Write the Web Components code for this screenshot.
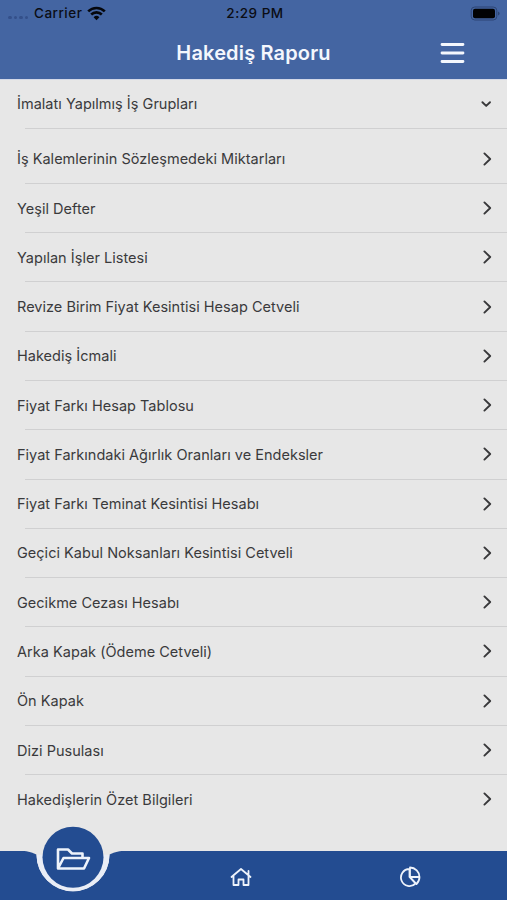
<!DOCTYPE html>
<html lang="tr">
<head>
<meta charset="utf-8">
<title>Hakediş Raporu</title>
<style>
  html, body { margin: 0; height: 100%; }
  body { background: #e7e7e7; color: #3a3a3c; font-family: Inter, "Liberation Sans", sans-serif; overflow: hidden; }
</style>
</head>
<body>
<report-screen>
  <status-bar slot="top" carrier="Carrier" time="2:29 PM"></status-bar>
  <title-bar slot="top">Hakediş Raporu</title-bar>
  <report-row kind="group">İmalatı Yapılmış İş Grupları</report-row>
  <report-row>İş Kalemlerinin Sözleşmedeki Miktarları</report-row>
  <report-row>Yeşil Defter</report-row>
  <report-row>Yapılan İşler Listesi</report-row>
  <report-row>Revize Birim Fiyat Kesintisi Hesap Cetveli</report-row>
  <report-row>Hakediş İcmali</report-row>
  <report-row>Fiyat Farkı Hesap Tablosu</report-row>
  <report-row>Fiyat Farkındaki Ağırlık Oranları ve Endeksler</report-row>
  <report-row>Fiyat Farkı Teminat Kesintisi Hesabı</report-row>
  <report-row>Geçici Kabul Noksanları Kesintisi Cetveli</report-row>
  <report-row>Gecikme Cezası Hesabı</report-row>
  <report-row>Arka Kapak (Ödeme Cetveli)</report-row>
  <report-row>Ön Kapak</report-row>
  <report-row>Dizi Pusulası</report-row>
  <report-row kind="last">Hakedişlerin Özet Bilgileri</report-row>
  <tab-bar slot="bottom"></tab-bar>
</report-screen>

<script>
function define(name, html, setup) {
  const template = document.createElement("template");
  template.innerHTML = html;
  customElements.define(name, class extends HTMLElement {
    constructor() {
      super();
      this.attachShadow({ mode: "open" }).append(template.content.cloneNode(true));
    }
    connectedCallback() { setup?.(this, this.shadowRoot); }
  });
}

define("report-screen", `
  <style>
    :host { display: flex; flex-direction: column; height: 100vh; }
    main { flex: 1; min-height: 0; }
    header { background: #4465a2; height: 79px; border-bottom: 0.7px solid #d3d8e8; }
  </style>
  <header><slot name="top"></slot></header>
  <main><slot></slot></main>
  <slot name="bottom"></slot>
`);

define("status-bar", `
  <style>
    :host {
      display: grid; grid-template-columns: 1fr auto 1fr; align-items: center;
      height: 26px; padding: 0 5px 0 8px; color: #0b0d14;
      font-size: 13.5px; font-weight: 500; letter-spacing: 0.5px;
    }
    .left { display: flex; align-items: center; }
    .dots { display: flex; gap: 2px; margin: 8px 6px 0 0; }
    .dots i { width: 3.5px; height: 3px; border-radius: 2px; background: #34508a; }
    .wifi { margin-left: 5px; }
    .battery { justify-self: end; }
    svg { display: block; }
  </style>
  <div class="left">
    <span class="dots"><i></i><i></i><i></i><i></i></span>
    <span id="carrier"></span>
    <svg class="wifi" width="19" height="15" viewBox="0 0 19 15" fill="none" stroke="#05070c" stroke-width="2.6">
      <path d="M1.2 5.4a11.8 11.8 0 0 1 16.6 0M4.2 8.5a7.6 7.6 0 0 1 10.6 0"/>
      <path d="M9.5 14.2 6.6 11.2a4.1 4.1 0 0 1 5.8 0z" fill="#05070c" stroke="none"/>
    </svg>
  </div>
  <span id="time"></span>
  <svg class="battery" width="35" height="15" viewBox="0 0 35 15">
    <rect x="4.2" y="1" width="25.6" height="13" rx="3.6" fill="none" stroke="#2d4574"/>
    <rect x="6" y="2.8" width="22" height="9.4" rx="2" fill="#020203"/>
    <path d="M31 5.4q1.6.6 1.6 2.1T31 9.600z" fill="#2d4574"/>
  </svg>
`, (host, root) => {
  root.getElementById("carrier").textContent = host.getAttribute("carrier");
  root.getElementById("time").textContent = host.getAttribute("time");
});

define("title-bar", `
  <style>
    :host {
      display: grid; grid-template-columns: 1fr auto 1fr; align-items: center;
      height: 53px; color: #f4f7fd; font-size: 20px; font-weight: 600; letter-spacing: 0.15px;
    }
    .title { grid-column: 2; }
    svg { display: block; justify-self: end; margin-right: 42px; }
  </style>
  <span class="title"><slot></slot></span>
  <svg width="25" height="22" viewBox="0 0 25 22" stroke="#f4f7fd" stroke-width="2.8" stroke-linecap="round">
    <path d="M2 2.500h21M2 11h21M2 19.500h21"/>
  </svg>
`);

define("report-row", `
  <style>
    :host { display: flex; flex-direction: column; height: 49.27px; font-size: 14.5px; letter-spacing: 0.02px; }
    :host([kind="group"]) { height: 48.6px; margin-bottom: 6.1px; }
    .row { flex: 1; display: flex; align-items: center; justify-content: space-between; padding: 0 15px 0 17px; }
    hr { width: 482px; height: 1px; margin: 0 0 0 25px; border: 0; background: #d0d0d1; }
    :host([kind="last"]) hr { background: none; }
    svg { display: block; fill: none; stroke: #38383a; stroke-width: 1.9; stroke-linecap: round; stroke-linejoin: round; }
    .down, :host([kind="group"]) .right { display: none; }
    :host([kind="group"]) .down { display: block; }
  </style>
  <div class="row">
    <span><slot></slot></span>
    <svg class="right" width="10" height="14" viewBox="0 0 10 14"><path d="m2.400 1.400 5.800 5.600-5.800 5.600"/></svg>
    <svg class="down" width="12" height="10" viewBox="0 0 12 10"><path d="M2.400 3.200 6.200 6.900l3.800-3.700"/></svg>
  </div>
  <hr>
`);

define("tab-bar", `
  <style>
    :host { display: grid; grid-template-columns: 157px 168.5px 168.5px; height: 49px; position: relative; }
    svg { display: block; }
    .shape { position: absolute; left: 0; bottom: 0; }
    .tab { position: relative; display: grid; place-items: center; padding-top: 3px; }
    .tab svg { fill: none; stroke: #eef3fb; stroke-width: 1.8; stroke-linejoin: round; stroke-linecap: round; }
    .active { padding: 0; }
    .active svg { stroke-width: 2.6; margin: -34px 0 0 -11px; }
  </style>
  <svg class="shape" width="507" height="76" viewBox="0 824 507 76">
    <path fill="#234c91" d="M0 851h22c6 0 12 2 14.500 3.800a36.500 36.500 0 0 0 73 0c2.500-1.800 8.500-3.800 14.500-3.800H507v49H0z"/>
    <path fill="#e9edf6" d="M36.500 854.800a36.500 36.500 0 0 0 73 0z"/>
    <circle cx="73" cy="857.200" r="30.500" fill="#234c91"/>
  </svg>
  <div class="tab active">
    <svg width="36" height="26" viewBox="0 0 36 26"><path d="M3 22.500V3.500h10l4 4h10.500v4.500M3 22.500 8.500 12H34l-5 10.500z"/></svg>
  </div>
  <div class="tab">
    <svg width="22" height="20" viewBox="0 0 22 20"><path d="M1.500 10 11 2l9.500 8M3.500 8.500V18h5v-5.500h5V18h5V8.500M18.500 8V4"/></svg>
  </div>
  <div class="tab">
    <svg width="22" height="22" viewBox="0 0 22 22"><path d="M10.500 3a8.500 8.500 0 1 0 6 14.500L10.500 11zM11 1.500a9.500 9.500 0 0 1 9.500 9.500H11zM11 11h9.500q0 4-3 7z"/></svg>
  </div>
`);
</script>
</body>
</html>
